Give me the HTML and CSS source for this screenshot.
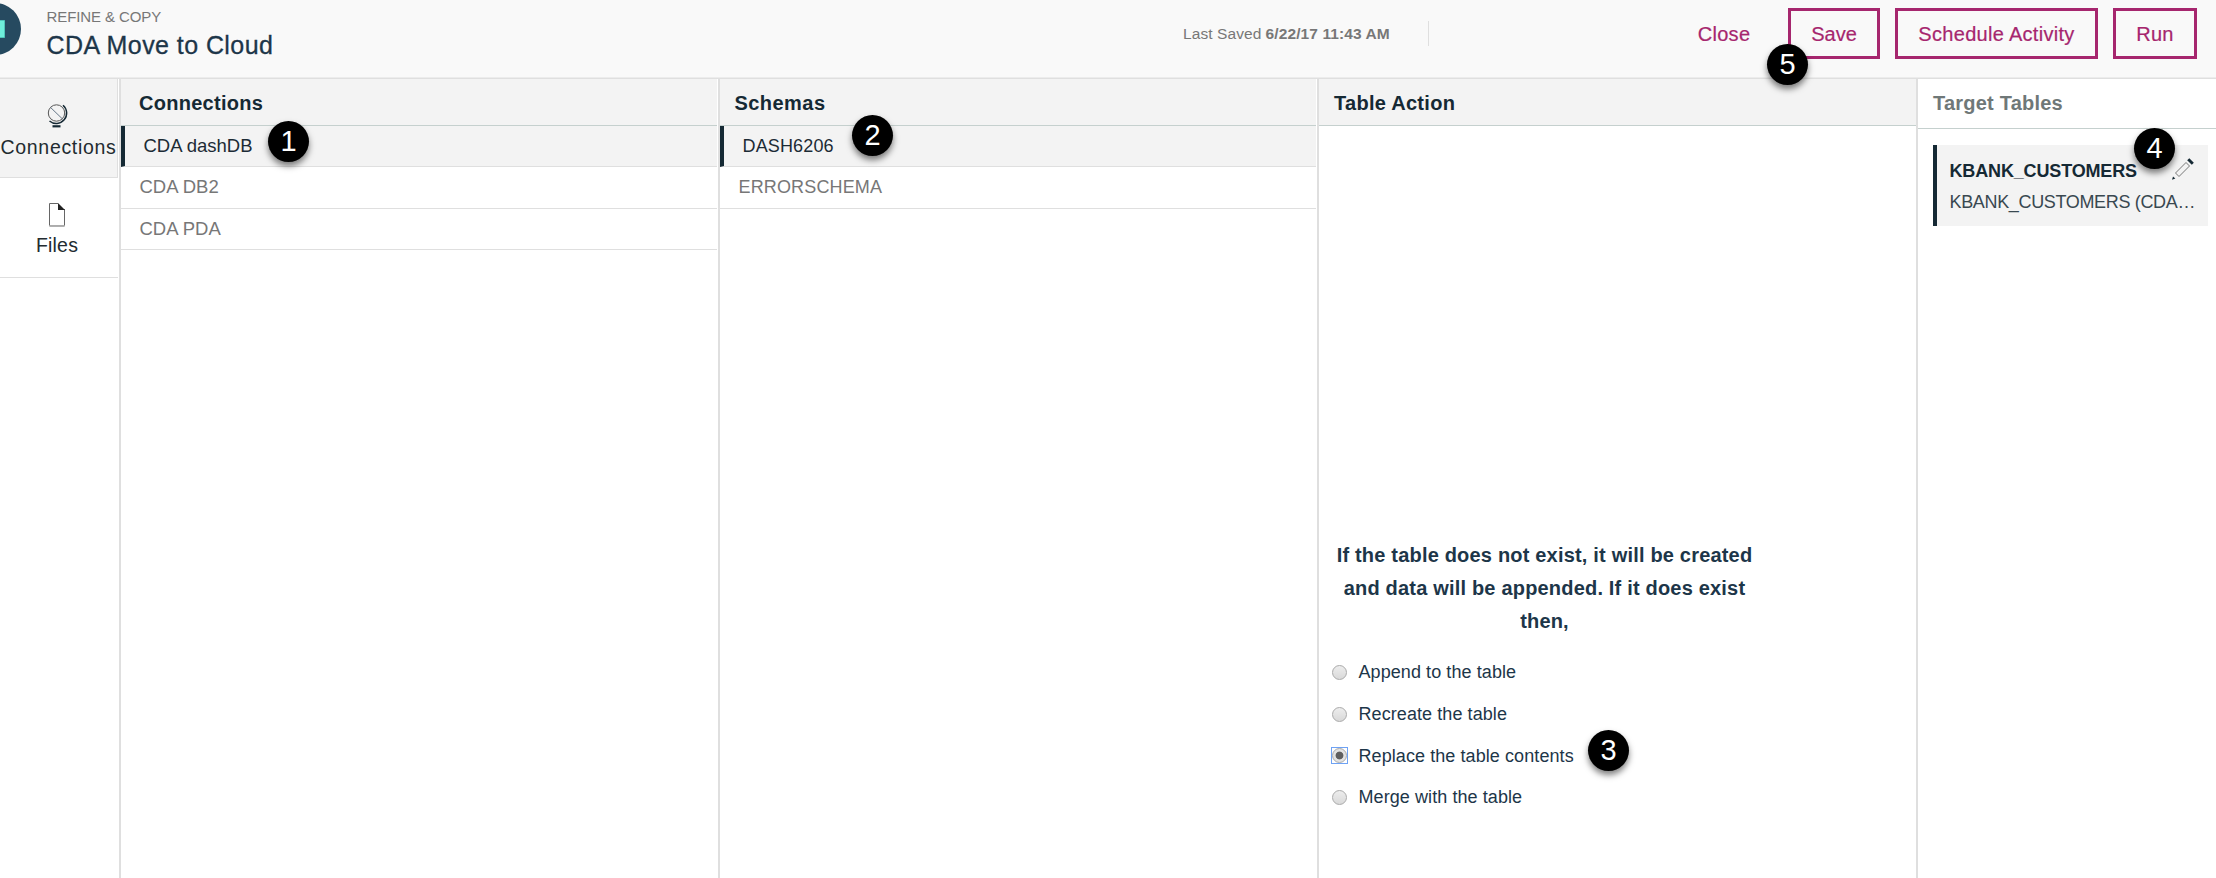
FILE: index.html
```
<!DOCTYPE html>
<html lang="en">
<head>
<meta charset="utf-8">
<title>CDA Move to Cloud</title>
<link rel="stylesheet" href="styles.css">
</head>
<body>
<div class="app">
  <header class="topbar">
    <div class="logo"><svg width="22" height="56" viewBox="0 0 22 56"><circle cx="-5" cy="29" r="26" fill="#264a60"/><path d="M0 20.5H4.5V37.5H0" fill="#6eeedb" stroke="#4fc4b8"/></svg></div>
    <div class="title-block">
      <div class="kicker">REFINE &amp; COPY</div>
      <div class="title">CDA Move to Cloud</div>
    </div>
    <div class="saved"><span class="saved-label">Last Saved</span><span class="saved-time">6/22/17 11:43 AM</span></div>
    <nav class="actions">
      <a class="btn btn-link">Close</a>
      <a class="btn btn-save">Save</a>
      <a class="btn btn-schedule">Schedule Activity</a>
      <a class="btn btn-run">Run</a>
    </nav>
  </header>
  <main class="workspace">
    <aside class="sidebar">
      <div class="tile tile-active">
        <svg class="tile-icon" width="24" height="26" viewBox="0 0 24 26" fill="none"><circle cx="9.5" cy="10" r="8.2" stroke="#555" stroke-width="1"/><path d="M3.6 4.5L15.5 16" stroke="#678" stroke-width="1"/><path d="M16 2.2A10.3 10.3 0 0 1 2.5 18" stroke="#152934" stroke-width="1.5"/><path d="M5.5 23.3H13.5" stroke="#152934" stroke-width="2.2"/></svg>
        <span class="tile-label tile-label-wide">Connections</span>
      </div>
      <div class="tile tile-files">
        <svg class="tile-icon" width="18" height="26" viewBox="0 0 18 26" fill="none"><path d="M16.5 7V24H1.5V1.5H10" stroke="#666" stroke-width="1"/><path d="M1 23.7H17" stroke="#aaa"/><path d="M10 1L17 8H10Z" fill="#222"/></svg>
        <span class="tile-label">Files</span>
      </div>
    </aside>
    <section class="column">
      <h2 class="column-head">Connections</h2>
      <div class="row row-selected">CDA dashDB</div>
      <div class="row row-tall">CDA DB2</div>
      <div class="row">CDA PDA</div>
    </section>
    <section class="column column-schemas">
      <h2 class="column-head">Schemas</h2>
      <div class="row row-selected">DASH6206</div>
      <div class="row row-tall">ERRORSCHEMA</div>
    </section>
    <section class="column column-action">
      <h2 class="column-head">Table Action</h2>
      <div class="action-body">
        <p class="notice">If the table does not exist, it will be created<br>and data will be appended. If it does exist<br>then,</p>
        <label class="option"><i class="radio"></i>Append to the table</label>
        <label class="option"><i class="radio"></i>Recreate the table</label>
        <label class="option"><i class="radio radio-on"></i>Replace the table contents</label>
        <label class="option"><i class="radio"></i>Merge with the table</label>
      </div>
    </section>
    <section class="targets">
      <h2 class="targets-head">Target Tables</h2>
      <div class="card">
        <div class="card-top"><span class="card-title">KBANK_CUSTOMERS</span>
          <svg class="pencil" width="24" height="24" viewBox="0 0 24 24" fill="none"><path d="M4.5 16L15 5.5L18.5 9L8 19.5Z" stroke="#777"/><path d="M16.2 3.2L18.3 1.2L22.8 5.7L20.8 7.8Z" fill="#152934"/><path d="M1 22.8L2 19.6L4.3 21.6Z" fill="#152934"/></svg></div>
        <div class="card-sub">KBANK_CUSTOMERS (CDA…</div>
      </div>
    </section>
  </main>
  <div class="badge badge-1">1</div>
  <div class="badge badge-2">2</div>
  <div class="badge badge-3">3</div>
  <div class="badge badge-4">4</div>
  <div class="badge badge-5">5</div>
</div>
</body>
</html>
```
FILE: styles.css
```
* { box-sizing: border-box; }
body { margin: 0; background: #fff; font-family: "Liberation Sans", Arial, sans-serif; color: #152934; }
.app { position: relative; width: 2216px; height: 878px; overflow: hidden; display: flex; flex-direction: column; }
.topbar { height: 79px; flex: none; display: flex; align-items: flex-start; background: #f9f9f9; border-bottom: 1px solid #dfdfdf; box-shadow: inset 0 -1px #ececec; white-space: nowrap; }
.logo { width: 46px; height: 56px; }
.logo svg { display: block; }
.title-block { width: 1136px; padding: 7px 0 0 0.5px; }
.kicker { font-size: 15px; line-height: 20px; letter-spacing: -0.1px; color: #777; }
.title { font-size: 25px; line-height: 37px; letter-spacing: 0.43px; color: #1d3649; -webkit-text-stroke: 0.3px #1d3649; }
.saved { width: 247px; height: 25px; margin-top: 21px; padding-left: 1px; border-right: 1px solid #dfdfdf; font-size: 15.5px; line-height: 26px; color: #777; display: flex; gap: 4px; letter-spacing: 0.1px; }
.saved-time { font-weight: bold; }
.actions { flex: 1; display: flex; justify-content: flex-end; padding: 8px 19px 0 0; gap: 15px; }
.btn { height: 51px; border: 3px solid #a6266e; color: #a6266e; font-size: 20px; line-height: 46px; letter-spacing: 0.3px; text-align: center; -webkit-text-stroke: 0.2px #a6266e; }
.btn-link { border-color: transparent; width: 98px; }
.btn-save { width: 92px; letter-spacing: 0; }
.btn-schedule { width: 203px; }
.btn-run { width: 84px; }
.workspace { flex: 1; display: flex; min-height: 0; }
.sidebar { width: 118px; margin-right: 1px; }
.tile { height: 100px; border-bottom: 1px solid #dfdfdf; display: flex; flex-direction: column; align-items: center; padding: 24px 3px 0 0; }
.tile-active { height: 99px; padding-right: 0; background: #f3f3f3; border-right: 1px solid #dfdfdf; }
.tile-files { padding-right: 4px; }
.tile-icon { display: block; }
.tile-label { font-size: 19.5px; line-height: 22px; margin-top: 7px; letter-spacing: 0.2px; white-space: nowrap; color: #222b30; }
.tile-files .tile-label { margin-top: 6px; }
.tile-label-wide { letter-spacing: 0.68px; }
.column { width: 599px; border-left: 2px solid #dfdfdf; padding-right: 1px; }
.column-action { padding-right: 0; }
.column-head { height: 47px; margin: 0; padding-left: 18px; background: #f3f3f3; border-bottom: 1px solid #c5d0ce; font-size: 20px; line-height: 48px; letter-spacing: 0.28px; color: #152934; }
.column-schemas .column-head { padding-left: 14.5px; letter-spacing: 0.45px; }
.column-action .column-head { padding-left: 15px; }
.row { height: 41px; padding-left: 18.5px; border-bottom: 1px solid #dfdfdf; font-size: 18.5px; line-height: 40px; letter-spacing: 0; color: #777; }
.row-tall { height: 42px; }
.column-schemas .row { font-size: 18px; letter-spacing: 0.15px; }
.row-selected { background: #f3f3f3; border-left: 4px solid #152934; color: #1c2b35; }
.action-body { padding: 413px 0 0 12.5px; }
.notice { margin: 0 0 13px; width: 426px; text-align: center; font-size: 20px; font-weight: bold; line-height: 33.2px; letter-spacing: 0.19px; color: #1d3649; }
.option { height: 41.6px; display: flex; align-items: center; gap: 12px; font-size: 18px; line-height: 22px; letter-spacing: 0.08px; color: #1d3649; }
.radio { width: 15px; height: 15px; border-radius: 50%; border: 1px solid #aaa; background: linear-gradient(#ededed, #d9d9d9); }
.radio-on { background: radial-gradient(circle, #5f5f5f 3.5px, #e3e3e3 4.3px); position: relative; }
.radio-on::after { content: ""; position: absolute; inset: -2px; border: 1px solid #6ea2f4; }
.targets { flex: 1; border-left: 2px solid #dfdfdf; }
.targets-head { height: 50px; margin: 0 0 16px; padding-left: 15px; border-bottom: 1px solid #c5d0ce; font-size: 20px; line-height: 48px; letter-spacing: 0.22px; color: #6f7878; }
.card { width: 275px; height: 81px; margin-left: 15px; padding: 12px 13px 0 12.5px; background: #f3f3f3; border-left: 4px solid #152934; white-space: nowrap; }
.card-top { display: flex; justify-content: space-between; font-size: 18px; line-height: 28px; font-weight: bold; letter-spacing: -0.15px; }
.card-sub { font-size: 18px; line-height: 34px; letter-spacing: -0.34px; color: #394850; }
.badge { position: absolute; width: 41px; height: 41px; border-radius: 50%; background: #000; color: #fff; font-size: 29px; line-height: 40px; text-align: center; box-shadow: 0 4px 6px rgba(0,0,0,.5); }
.badge-1 { left: 268px; top: 121px; }
.badge-2 { left: 852px; top: 115px; }
.badge-3 { left: 1588px; top: 730px; }
.badge-4 { left: 2134px; top: 128px; }
.badge-5 { left: 1767px; top: 44px; }
```
